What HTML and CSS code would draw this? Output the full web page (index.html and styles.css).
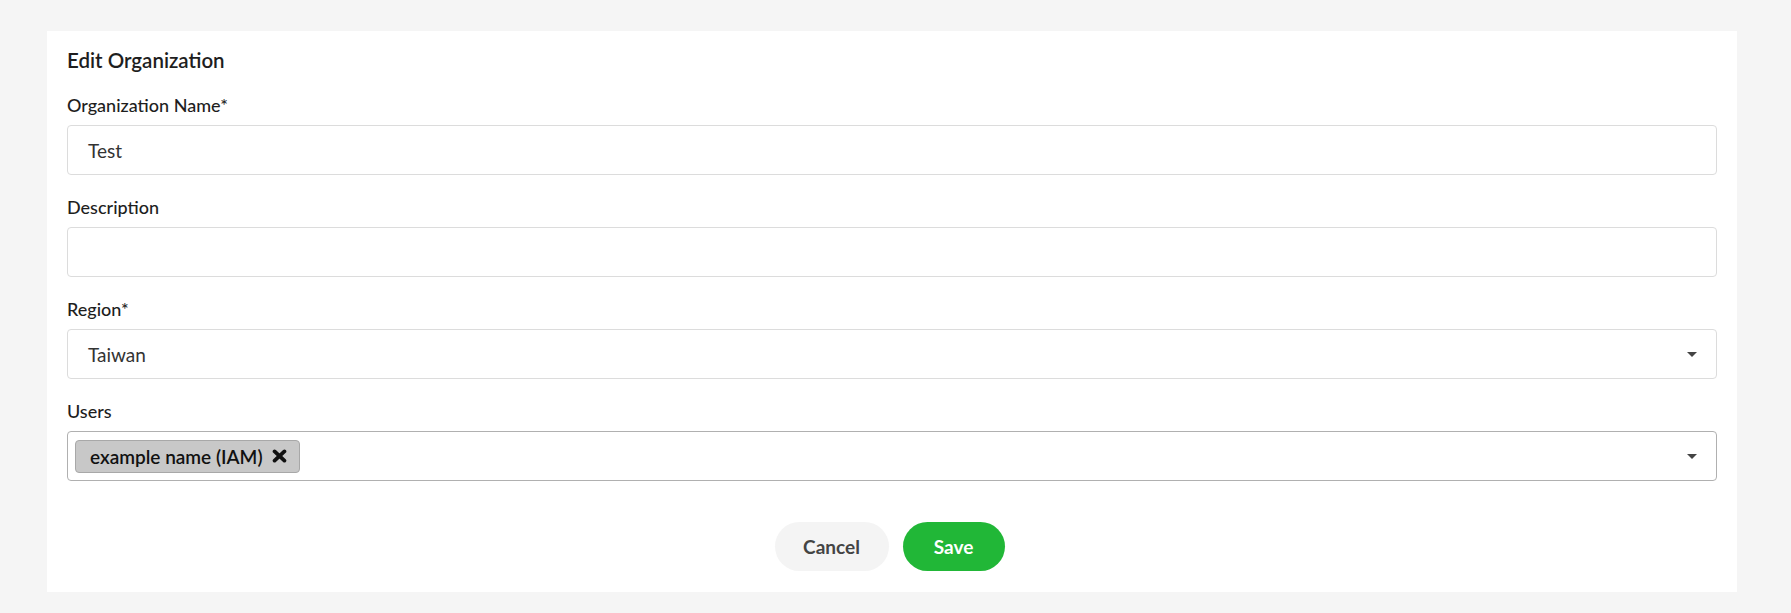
FILE: index.html
```html
<!DOCTYPE html>
<html lang="en">
<head>
<meta charset="utf-8">
<title>Edit Organization</title>
<link rel="stylesheet" href="styles.css">
</head>
<body>
<div class="card">
  <h2 class="title">Edit Organization</h2>
  <div class="group">
    <label class="label">Organization Name*</label>
    <div class="field">Test</div>
  </div>
  <div class="group">
    <label class="label">Description</label>
    <div class="field"></div>
  </div>
  <div class="group">
    <label class="label">Region*</label>
    <div class="field select">
      <span>Taiwan</span>
      <span class="caret"></span>
    </div>
  </div>
  <div class="group">
    <label class="label">Users</label>
    <div class="field select multi">
      <span class="tag">example name (IAM)
        <svg class="tag-x" width="15" height="14" viewBox="0 0 15 14"><path d="M2.6 2.4 L12.4 11.6 M12.4 2.4 L2.6 11.6" stroke="#111" stroke-width="3.8" stroke-linecap="round" fill="none"/></svg>
      </span>
      <span class="caret"></span>
    </div>
  </div>
  <div class="actions">
    <button class="btn btn-cancel">Cancel</button>
    <button class="btn btn-save">Save</button>
  </div>
</div>
</body>
</html>
```

FILE: styles.css
```css
html, body {
  margin: 0;
  padding: 0;
}
body {
  background: #f5f5f5;
  font-family: Lato, "Open Sans", "Liberation Sans", sans-serif;
  color: #222;
}
.card {
  background: #fff;
  margin: 31px 54px 0 47px;
  padding: 17px 20px 20px 20px;
  box-sizing: border-box;
  height: 561px;
}
.title {
  margin: 0 0 22px 0;
  font-size: 20.5px;
  line-height: 24px;
  font-weight: 600;
  color: #1e1e1e;
}
.group {
  margin-bottom: 21px;
}
.label {
  display: block;
  font-size: 18px;
  line-height: 22px;
  font-weight: 500;
  color: #1e1e1e;
  margin-bottom: 9px;
}
.field {
  height: 50px;
  box-sizing: border-box;
  border: 1px solid #dcdcdc;
  border-radius: 4px;
  padding: 0 20px;
  display: flex;
  align-items: center;
  font-size: 19px;
  color: #333;
}
.select {
  justify-content: space-between;
  padding-right: 19px;
}
.multi {
  border-color: #b0b0b0;
  padding-left: 7px;
}
.caret {
  width: 0;
  height: 0;
  border-left: 5px solid transparent;
  border-right: 5px solid transparent;
  border-top: 5px solid #444;
}
.tag {
  display: inline-flex;
  align-items: center;
  gap: 9px;
  height: 33px;
  box-sizing: border-box;
  padding: 0 12px 0 14px;
  background: #c8c8c8;
  border: 1px solid #a8a8a8;
  border-radius: 4px;
  font-size: 19px;
  font-weight: 600;
  color: #111;
}
.tag-x {
  display: block;
}
.actions {
  display: flex;
  justify-content: center;
  gap: 14px;
  margin-top: 41px;
  padding-right: 5px;
}
.btn {
  height: 49px;
  border: none;
  border-radius: 25px;
  font-family: inherit;
  font-size: 19px;
  font-weight: 700;
  cursor: pointer;
}
.btn-cancel {
  background: #f4f4f4;
  color: #444;
  width: 114px;
}
.btn-save {
  background: #21b737;
  color: #fff;
  width: 102px;
}
```
